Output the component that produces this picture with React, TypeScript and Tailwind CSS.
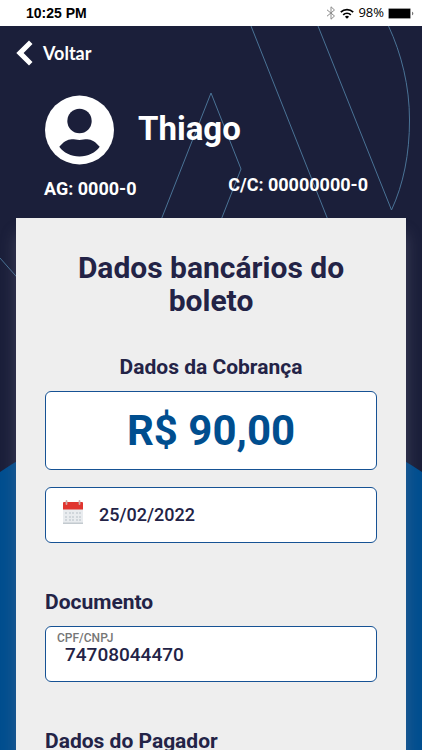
import type { ReactNode } from "react";

function BluetoothIcon() {
  return (
    <svg width="10" height="14" viewBox="0 0 10 14" fill="none" stroke="#8a8a8a" strokeWidth="1" aria-hidden="true">
      <path d="M1 3.800l7.500 6.200L5 13.200V.8L8.500 4 1 10.200" />
    </svg>
  );
}

function WifiIcon() {
  return (
    <svg width="14" height="11" viewBox="0 0 14 11" fill="none" stroke="#000" strokeWidth="1.7" aria-hidden="true">
      <path d="M.8 4.2a8.8 8.8 0 0 1 12.4 0" />
      <path d="M3.2 6.8a5.4 5.4 0 0 1 7.6 0" />
      <path d="M7 10.8 4.9 8.7a3 3 0 0 1 4.2 0z" fill="#000" stroke="none" />
    </svg>
  );
}

function BatteryIcon() {
  return (
    <svg width="26" height="11" viewBox="0 0 26 11" aria-hidden="true">
      <rect x=".5" y=".5" width="22" height="10" rx="1" fill="#000" stroke="#9a9a9a" />
      <path d="M24 3.7c1 .3 1.3 1 1.3 1.8S25 7 24 7.3z" fill="#777" />
    </svg>
  );
}

function BackIcon() {
  return (
    <svg width="17" height="26" viewBox="0 0 17 26" fill="#fff" aria-hidden="true">
      <path d="M13 .5 16.500 4 7.600 13l8.900 9-3.500 3.500L.3 13z" />
    </svg>
  );
}

function AvatarIcon() {
  return (
    <svg width="70" height="70" viewBox="0 0 70 70" aria-hidden="true">
      <circle cx="35.5" cy="35" r="34.5" fill="#fff" />
      <circle cx="35.5" cy="26" r="12.2" fill="#1b1f3a" />
      <path
        d="M15.300 51.800c3.800-4.800 8.200-7.600 12.400-7.600 3 0 4.800.7 7.800.7s4.800-.7 7.800-.7c4.200 0 8.600 2.800 12.400 7.600C51.500 57.800 44 61.500 35.500 61.500s-16-3.700-20.200-9.700z"
        fill="#1b1f3a"
      />
    </svg>
  );
}

function CalendarIcon() {
  const rows = [13, 17, 20];
  const cols = [3, 7, 10, 14, 17];
  return (
    <svg width="20" height="24" viewBox="0 0 20 24" aria-hidden="true">
      <rect y="3" width="20" height="21" rx="1" fill="#e9ecef" />
      <rect y="22.5" width="20" height="1.5" fill="#c3cacf" />
      <path d="M0 3a1 1 0 0 1 1-1h18a1 1 0 0 1 1 1v6.500H0z" fill="#e0352f" />
      {rows.map((y) => cols.map((x) => <rect key={`${x}-${y}`} x={x - 0.8} y={y - 0.8} width="1.6" height="1.6" fill="#c3cad1" />))}
      <path d="M3.500 1v3M16.500 1v3" stroke="#cdaba8" strokeWidth="1.800" strokeLinecap="round" />
    </svg>
  );
}

function Backdrop() {
  return (
    <svg
      className="absolute inset-0 h-full w-full"
      viewBox="0 0 422 724"
      preserveAspectRatio="xMidYMin slice"
      fill="none"
      aria-hidden="true"
    >
      <g stroke="#4a7396" strokeWidth="1">
        <path d="M161 194 211 67l30 76-20 51" />
        <path d="M251 0l77 194" />
        <path d="M318 0l73.500 184c12-26 18-56 18-90 0-34-8-66-21-94" />
        <path d="M0 232l30 34" />
      </g>
      <path d="M0 446C60 405 135 385 211 385s151 20 211 61v278H0z" fill="#004e8f" />
    </svg>
  );
}

function SectionTitle({ children, center }: { children: ReactNode; center?: boolean }) {
  return (
    <h2 className={center ? "text-center text-[21px] leading-6 font-bold" : "text-[21px] leading-6 font-bold"}>
      {children}
    </h2>
  );
}

function StatusBar() {
  return (
    <div className="flex h-[26px] shrink-0 items-center justify-between bg-white pr-2 pl-[26px] text-black">
      <span className="font-['Liberation_Sans'] text-sm font-bold">10:25 PM</span>
      <div className="flex items-center gap-1">
        <BluetoothIcon />
        <WifiIcon />
        <span className="font-['Open_Sans'] text-[13px]">98%</span>
        <BatteryIcon />
      </div>
    </div>
  );
}

function AccountHeader() {
  return (
    <header className="relative h-48 text-white">
      <button type="button" className="flex items-center gap-[10px] pt-[14px] pl-4">
        <BackIcon />
        <span className="font-['Lato'] text-lg leading-6 font-bold">Voltar</span>
      </button>
      <div className="flex pt-[29px] pr-[54px] pl-11">
        <div className="w-[94px] shrink-0">
          <AvatarIcon />
          <p className="mt-3 text-lg leading-6 font-bold whitespace-nowrap">AG: 0000-0</p>
        </div>
        <div className="flex flex-1 flex-col">
          <h1 className="pt-4 text-[33px] leading-9 font-bold">Thiago</h1>
          <p className="mt-[26px] text-right text-lg leading-6 font-bold">C/C: 00000000-0</p>
        </div>
      </div>
    </header>
  );
}

export default function App() {
  return (
    <div className="flex h-screen flex-col overflow-hidden bg-[#1b1f3a] font-['Roboto',sans-serif]">
      <StatusBar />
      <div className="relative min-h-0 flex-1">
        <Backdrop />
        <AccountHeader />
        <main className="relative mx-4 bg-[#eeeeee] px-[29px] pt-[33px] pb-10 text-[#232346] shadow-[0_16px_14px_rgba(130,125,150,0.35)]">
          <h1 className="text-center text-3xl leading-[33px] font-bold">Dados bancários do boleto</h1>

          <section className="pt-[38px]">
            <SectionTitle center>Dados da Cobrança</SectionTitle>
            <input
              type="text"
              aria-label="Valor"
              defaultValue="R$ 90,00"
              className="mt-3 h-[79px] w-full rounded-md border border-[#165294] bg-white text-center text-[42px] font-bold text-[#004e8f]"
            />
            <div className="mt-[17px] flex h-14 items-center rounded-md border border-[#165294] bg-white pl-[17px]">
              <span className="pb-[6px]">
                <CalendarIcon />
              </span>
              <input
                type="text"
                aria-label="Vencimento"
                defaultValue="25/02/2022"
                className="ml-4 min-w-0 flex-1 bg-transparent text-lg leading-6 font-medium"
              />
            </div>
          </section>

          <section className="pt-[47px]">
            <SectionTitle>Documento</SectionTitle>
            <div className="mt-3 flex h-14 flex-col rounded-md border border-[#165294] bg-white px-[11px] pt-1">
              <label htmlFor="cpf" className="text-xs leading-[14px] font-medium text-[#767676]">
                CPF/CNPJ
              </label>
              <input
                id="cpf"
                type="text"
                inputMode="numeric"
                defaultValue="74708044470"
                className="w-full bg-transparent pl-2 text-[19px] leading-5 font-medium"
              />
            </div>
          </section>

          <section className="pt-[47px]">
            <SectionTitle>Dados do Pagador</SectionTitle>
          </section>
        </main>
      </div>
    </div>
  );
}
